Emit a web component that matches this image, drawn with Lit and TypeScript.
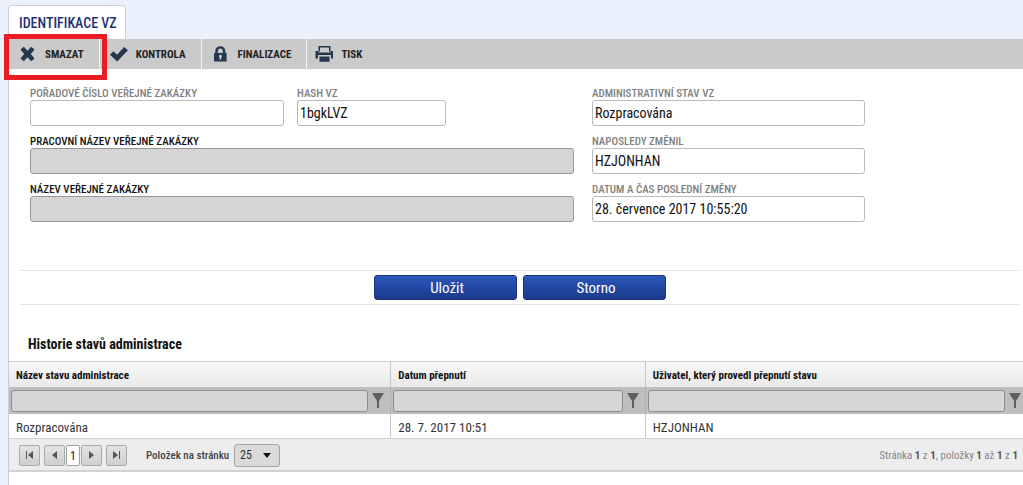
import { LitElement, html, css, svg } from "lit";
import { customElement } from "lit/decorators.js";
import { classMap } from "lit/directives/class-map.js";

const cross = svg`<path d="M3.800 .8 7.500 4.800l3.700-4 3.300 2.700L10.800 8l3.700 4.500-3.300 2.700-3.700-4-3.700 4-3.300-2.700L4.200 8 .5 3.500z"/>`;
const check = svg`<path d="M-1 8.800 2.400 5.200l3.600 3.600L13.200 .9 16.900 4.200 6.200 15.400z"/>`;
const lock = svg`<path fill-rule="evenodd" d="M1 7H2.300V5a5 4.800 0 0 1 10 0v2H13.600v8.500H1zM4.800 7h5V5a2.500 2.400 0 0 0-5 0z"/><path fill="#d5dbe4" d="M6.600 13.500v-2.200a1.400 1.400 0 1 1 1.600 0v2.200z"/>`;
const printer = svg`<path fill-rule="evenodd" d="M2.500 0h12v5.500h-12zM4 1.500V5.500h9v-4zM-.5 5h3v1.500h12V5h3v7.500h-2.500V9H2v3.500H-.5zM3.500 10.500h10V15.800h-10z"/>`;

const tools = [
  { text: "SMAZAT", icon: cross },
  { text: "KONTROLA", icon: check },
  { text: "FINALIZACE", icon: lock },
  { text: "TISK", icon: printer },
];

const columns = [
  { title: "Název stavu administrace", cls: "c1" },
  { title: "Datum přepnutí", cls: "c2" },
  { title: "Uživatel, který provedl přepnutí stavu", cls: "c3" },
];
const rows = [["Rozpracována", "28. 7. 2017 10:51", "HZJONHAN"]];

const arrows = {
  first: { label: "První stránka", d: "M0 0h1v8H0zM7 0v8L2 4z" },
  prev: { label: "Předchozí stránka", d: "M6 0v8L1 4z" },
  next: { label: "Další stránka", d: "M1 0v8l5-4z" },
  last: { label: "Poslední stránka", d: "M0 0v8l5-4zM6 0h1v8H6z" },
};

@customElement("app-root")
export class AppRoot extends LitElement {
  static styles = css`
    :host {
      display: flex;
      flex-direction: column;
      min-height: 100vh;
      box-sizing: border-box;
      padding: 5px 0 0 8px;
      background: #eaf1fd;
      color: #111;
      font-family: "Roboto Condensed", "Liberation Sans Narrow", Roboto, sans-serif;
      font-size: 14px;
    }
    * { box-sizing: border-box; }
    button, input, select { font: inherit; margin: 0; }
    .tabs { display: flex; }
    .tab {
      height: 34px;
      padding: 0 8px 0 10px;
      border: 1px solid #cdd2da;
      border-bottom: 0;
      border-radius: 4px 4px 0 0;
      background: #fff;
      color: #1c3278;
      font-size: 14px;
      font-weight: 500;
    }
    .page { flex: 1; background: #fff; border-left: 1px solid #c8ccd4; }
    .tools { display: flex; height: 30px; background: #cacaca; }
    .slot { position: relative; display: flex; }
    .tool {
      display: flex;
      align-items: center;
      gap: 8px;
      padding: 0 15px 0 10px;
      border: 0;
      border-right: 1px solid #f4f4f4;
      background: none;
      color: #222;
      font-size: 11px;
      font-weight: 700;
    }
    .slot:last-child .tool { border-right: 0; padding-left: 8px; }
    .tool svg { width: 18px; height: 16px; fill: #25364f; }
    .mark {
      position: absolute;
      inset: -5px -7px -11px -5px;
      border: 5px solid #ec1c24;
      pointer-events: none;
      z-index: 1;
    }
    .form {
      display: grid;
      grid-template-columns: 544fr 273fr 140fr;
      gap: 18px;
      padding: 17px 0 0 21px;
    }
    .stack { display: flex; flex-direction: column; gap: 8px; min-width: 0; }
    .pair { display: grid; grid-template-columns: 254fr 149fr 115fr; gap: 13px; }
    .field { display: flex; flex-direction: column; min-width: 0; }
    .field label { height: 14px; line-height: 16px; font-size: 11px; font-weight: 500; white-space: nowrap; color: #808080; }
    .field input {
      width: 100%;
      height: 26px;
      padding: 0 2px;
      border: 1px solid #b9b9b9;
      border-radius: 3px;
      background: #fff;
      color: #111;
      font-size: 14px;
    }
    .field.wanted label { color: #111; }
    .field.wanted input { background: #d5d5d5; border-color: #989898; }
    .actions {
      display: flex;
      justify-content: center;
      gap: 6px;
      margin: 48px 4px 0 11px;
      padding: 4px 0;
      border: solid #e2e2e2;
      border-width: 1px 0;
    }
    .action {
      width: 143px;
      height: 25px;
      padding: 0 0 0 4px;
      border: 1px solid #1c3480;
      border-radius: 3px;
      background: linear-gradient(#2b57bb, #1c3a8c);
      color: #fff;
      font-size: 15px;
    }
    h2 { margin: 30px 0 8px 19px; font-size: 14px; line-height: 18px; font-weight: 700; }
    table { width: 100%; table-layout: fixed; border-collapse: separate; border-spacing: 0; }
    .c1 { width: 37.7%; }
    .c2 { width: 25.1%; }
    th, td { text-align: left; padding: 2px 7px 0; border-right: 1px solid #c6c6c6; }
    th:last-child, td:last-child { border-right: 0; }
    .head th {
      height: 26px;
      border-top: 1px solid #cfcfcf;
      background: linear-gradient(#f8f8f8, #e9e9e9);
      font-size: 11px;
      font-weight: 700;
    }
    .filters td { height: 27px; padding: 0 6px 0 2px; background: #bebebe; border-color: #b2b2b2; }
    .filters td:last-child { padding-right: 2px; }
    .filter { display: flex; align-items: center; gap: 4px; }
    .filter input {
      flex: 1;
      min-width: 0;
      height: 22px;
      border: 1px solid #8d8d8d;
      border-radius: 3px;
      background: #d6d6d6;
    }
    .funnel { display: flex; padding: 0; border: 0; background: none; }
    .funnel svg { width: 12px; height: 15px; fill: #606060; }
    .row td { height: 24px; font-size: 13px; color: #333; }
    .pager {
      display: flex;
      align-items: center;
      height: 34px;
      padding: 1px 5px 0 10px;
      background: #ededed;
      border: solid #d2d2d2;
      border-width: 1px 0 2px;
      font-size: 11px;
      color: #444;
    }
    .nav { display: flex; align-items: center; }
    .step {
      display: flex;
      align-items: center;
      justify-content: center;
      width: 21px;
      height: 21px;
      padding: 0;
      border: 1px solid #a9a9a9;
      border-radius: 2px;
      background: linear-gradient(#e4e4e4, #cfcfcf);
    }
    .step svg { width: 7px; height: 8px; fill: #555; }
    .step.outer:first-child { margin-right: 4px; }
    .step.outer:last-child { margin-left: 4px; }
    .current {
      width: 14px;
      height: 21px;
      margin: 0 1px;
      border: 1px solid #a0a0a0;
      border-radius: 2px;
      background: #fff;
      text-align: center;
      line-height: 20px;
      font-size: 12px;
      color: #222;
      text-decoration: none;
    }
    .size { display: flex; align-items: center; gap: 4px; margin-left: 19px; font-size: 12px; }
    .size .box { position: relative; display: flex; }
    select {
      appearance: none;
      width: 46px;
      height: 23px;
      padding: 0 5px;
      border: 1px solid #a4a4a4;
      border-radius: 3px;
      background: #dadada;
      color: #333;
    }
    .size label { font-size: 11px; width: 84px; font-weight: 500; }
    .caret { position: absolute; right: 9px; top: 9px; width: 8px; height: 5px; fill: #111; pointer-events: none; }
    .info { margin-left: auto; color: #858585; }
    .info b { color: #555; }
  `;

  private field(id: string, label: string, value = "", wanted = false) {
    return html`<div class=${classMap({ field: true, wanted })}>
      <label for=${id}>${label}</label><input id=${id} type="text" .value=${value} />
    </div>`;
  }

  private step(kind: keyof typeof arrows) {
    const outer = kind === "first" || kind === "last";
    return html`<button class=${classMap({ step: true, outer })} aria-label=${arrows[kind].label}>
      <svg viewBox="0 0 7 8"><path d=${arrows[kind].d} /></svg>
    </button>`;
  }

  render() {
    return html`
      <div class="tabs"><button class="tab">IDENTIFIKACE VZ</button></div>
      <main class="page">
        <div class="tools">
          ${tools.map(
            (t, i) => html`<div class="slot">
              <button class="tool"><svg viewBox="-1 0 18 16">${t.icon}</svg>${t.text}</button>
              ${i === 0 ? html`<div class="mark"></div>` : ""}
            </div>`
          )}
        </div>
        <form class="form">
          <div class="stack">
            <div class="pair">
              ${this.field("number", "POŘADOVÉ ČÍSLO VEŘEJNÉ ZAKÁZKY")}
              ${this.field("hash", "HASH VZ", "1bgkLVZ")}
            </div>
            ${this.field("draft", "PRACOVNÍ NÁZEV VEŘEJNÉ ZAKÁZKY", "", true)}
            ${this.field("name", "NÁZEV VEŘEJNÉ ZAKÁZKY", "", true)}
          </div>
          <div class="stack">
            ${this.field("state", "ADMINISTRATIVNÍ STAV VZ", "Rozpracována")}
            ${this.field("user", "NAPOSLEDY ZMĚNIL", "HZJONHAN")}
            ${this.field("changed", "DATUM A ČAS POSLEDNÍ ZMĚNY", "28. července 2017 10:55:20")}
          </div>
        </form>
        <div class="actions">
          <button class="action">Uložit</button>
          <button class="action">Storno</button>
        </div>
        <h2>Historie stavů administrace</h2>
        <table>
          <thead>
            <tr class="head">${columns.map((c) => html`<th class=${c.cls}>${c.title}</th>`)}</tr>
            <tr class="filters">
              ${columns.map(
                (c) => html`<td>
                  <div class="filter">
                    <input type="text" aria-label=${c.title} />
                    <button class="funnel" aria-label="Filtr">
                      <svg viewBox="0 0 12 15"><path d="M0 0h12L7 8v7H5V8z" /></svg>
                    </button>
                  </div>
                </td>`
              )}
            </tr>
          </thead>
          <tbody>
            ${rows.map((r) => html`<tr class="row">${r.map((v) => html`<td>${v}</td>`)}</tr>`)}
          </tbody>
        </table>
        <div class="pager">
          <div class="nav">
            ${this.step("first")}${this.step("prev")}<a class="current" href="#">1</a>${this.step("next")}${this.step("last")}
          </div>
          <div class="size">
            <label for="size">Položek na stránku</label>
            <span class="box">
              <select id="size"><option>25</option><option>50</option></select>
              <svg class="caret" viewBox="0 0 8 5"><path d="M0 0h8L4 5z" /></svg>
            </span>
          </div>
          <div class="info">Stránka <b>1</b> z <b>1</b>, položky <b>1</b> až <b>1</b> z <b>1</b></div>
        </div>
      </main>
    `;
  }
}
